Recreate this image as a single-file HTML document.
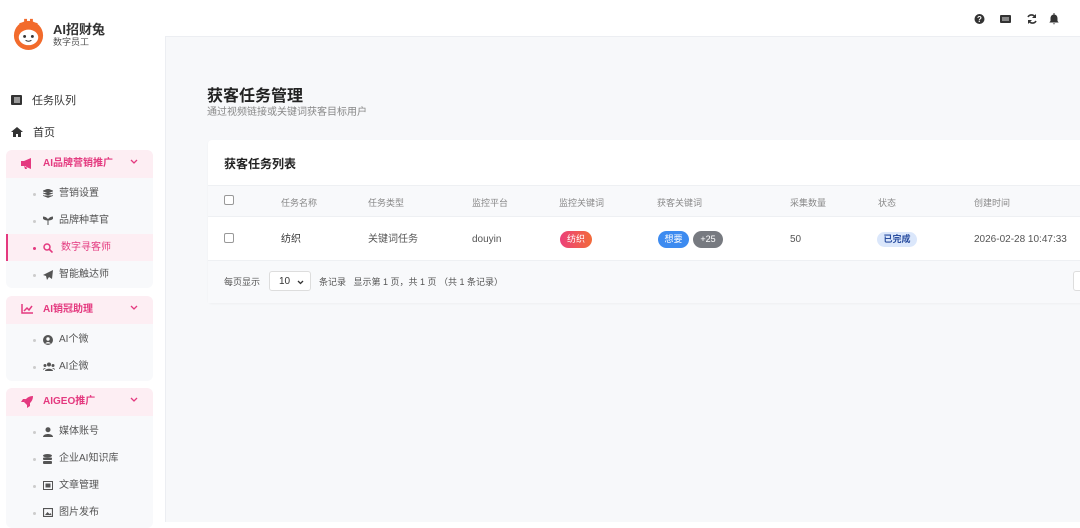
<!DOCTYPE html><html><head><meta charset="utf-8"><style>
*{box-sizing:border-box;margin:0;padding:0}
body{width:1080px;height:522px;overflow:hidden;font-family:"Liberation Sans","Noto Sans CJK SC",sans-serif;background:#fff;position:relative;color:#333}
.a{position:absolute}
.sb{left:0;top:0;width:165px;height:522px;background:#fff}
.main{left:165px;top:37px;width:915px;height:485px;background:#f7f8fa;border-left:1px solid #eceef2}
.hdr{left:165px;top:0;width:915px;height:37px;background:#fff;border-bottom:1px solid #eceef2}
.grp{left:6px;width:147px;background:#f8f9fb;border-radius:6px}
.gh{height:28px;background:#fdeef3;border-radius:6px 6px 0 0;color:#e4397f;font-size:10px;font-weight:bold;line-height:28px;padding-left:37px;position:relative}
.gh svg{position:absolute;left:15px;top:8px}
.gh svg.ch{left:auto;right:15px;top:9px}
.it{position:absolute;left:0;width:147px;height:27px;line-height:27px;font-size:10px;color:#555;padding-left:53px}
.it .d{position:absolute;left:27px;top:13px;width:3px;height:3px;border-radius:50%;background:#ccc}
.it svg{position:absolute;left:37px;top:9px}
.nav{left:11px;font-size:11px;color:#333}
.nav svg{vertical-align:-1px;margin-right:10px}
.card{left:208px;top:140px;width:880px;height:163px;background:#fff;border-radius:4px;box-shadow:0 1px 2px rgba(0,0,0,.04)}
.th{font-size:9px;color:#888}
.td{font-size:10px;color:#555;line-height:12px}
.cb{width:10px;height:10px;border:1px solid #999;border-radius:2px;background:#fff}
.pill{border-radius:9px;height:17px;line-height:17px;font-size:9px;color:#fff;text-align:center}
</style></head><body>
<div class="a sb">
 <svg class="a" style="left:11px;top:16px" width="35" height="35" viewBox="0 0 36 36"><path d="M10 7 L12 15 M15 3 L15 13 M21 3 L21 13 M26 7 L24 15" stroke="#f26b2c" stroke-width="3"/><circle cx="18" cy="20" r="15" fill="#f26b2c"/><ellipse cx="18" cy="22" rx="10" ry="8" fill="#fff"/><circle cx="14" cy="21" r="1.5" fill="#333"/><circle cx="22" cy="21" r="1.5" fill="#333"/><path d="M15 25 Q18 27 21 25" stroke="#333" fill="none"/></svg>
 <div class="a" style="left:53px;top:19px;font-size:13px;font-weight:bold;color:#333">AI招财兔</div>
 <div class="a" style="left:53px;top:35px;font-size:9px;color:#555">数字员工</div>
 <div class="a nav" style="top:92px"><svg width="11" height="10"><rect x="0" y="0" width="11" height="10" rx="1" fill="#333"/><path d="M3 3h6M3 5h6M3 7h6" stroke="#fff"/></svg>任务队列</div>
 <div class="a nav" style="top:124px"><svg width="12" height="10"><path d="M6 0L0 5h2v5h3V7h2v3h3V5h2z" fill="#333"/></svg>首页</div>
 <div class="a grp" style="top:150px;height:138px"><div class="gh"><svg width="12" height="11"><path d="M0 3h3l7-3v11l-7-3H0z M3 8l1 3h2l-1-3" fill="#e4397f"/></svg>AI品牌营销推广<svg class="ch" width="8" height="5"><path d="M1 1l3 3 3-3" stroke="#e4397f" fill="none" stroke-width="1.3"/></svg></div>
  <div class="it" style="top:30px"><span class="d"></span><svg width="10" height="9"><path d="M5 0L10 2 5 4 0 2z M0 4l5 2 5-2 M0 6.5l5 2 5-2" fill="#555" stroke="#555" stroke-width=".8"/></svg>营销设置</div>
  <div class="it" style="top:57px"><span class="d"></span><svg width="10" height="9"><path d="M5 9V4 M5 4C3 1 1 1 0 1c0 2 2 3 5 3 M5 4c2-3 4-3 5-3 0 2-2 3-5 3" fill="#555" stroke="#555"/></svg>品牌种草官</div>
  <div class="it" style="top:84px;background:#fdeef3;color:#e4397f;border-left:2px solid #e4397f"><span class="d" style="background:#e4397f;left:25px"></span><svg width="10" height="10" style="left:35px"><circle cx="4" cy="4" r="3" stroke="#e4397f" stroke-width="1.5" fill="none"/><path d="M6 6l3.5 3.5" stroke="#e4397f" stroke-width="1.6"/></svg>数字寻客师</div>
  <div class="it" style="top:111px"><span class="d"></span><svg width="10" height="10"><path d="M10 0L0 5l3 1 1 4 2-3 3 2z" fill="#555"/></svg>智能触达师</div>
 </div>
 <div class="a grp" style="top:296px;height:85px"><div class="gh"><svg width="12" height="10"><path d="M1 0v9h11" stroke="#e4397f" fill="none" stroke-width="1.5"/><path d="M3 7l3-3 2 2 3-4" stroke="#e4397f" fill="none" stroke-width="1.5"/></svg>AI销冠助理<svg class="ch" width="8" height="5"><path d="M1 1l3 3 3-3" stroke="#e4397f" fill="none" stroke-width="1.3"/></svg></div>
  <div class="it" style="top:30px"><span class="d"></span><svg width="10" height="10"><circle cx="5" cy="5" r="5" fill="#555"/><circle cx="5" cy="4" r="1.7" fill="#fff"/><path d="M2 8.5Q5 5.5 8 8.5" fill="#fff"/></svg>AI个微</div>
  <div class="it" style="top:57px"><span class="d"></span><svg width="12" height="9"><circle cx="6" cy="2.5" r="2" fill="#555"/><circle cx="2" cy="3.5" r="1.5" fill="#555"/><circle cx="10" cy="3.5" r="1.5" fill="#555"/><path d="M2 9c0-3 8-3 8 0zM0 8c0-2 2-2 3-2M12 8c0-2-2-2-3-2" fill="#555"/></svg>AI企微</div>
 </div>
 <div class="a grp" style="top:388px;height:140px"><div class="gh"><svg width="12" height="12"><path d="M12 0C8 0 5 2 3 6l3 3c4-2 6-5 6-9z M3 6L0 6l2-3h3z M6 9v3l3-2V7z" fill="#e4397f"/></svg>AIGEO推广<svg class="ch" width="8" height="5"><path d="M1 1l3 3 3-3" stroke="#e4397f" fill="none" stroke-width="1.3"/></svg></div>
  <div class="it" style="top:30px"><span class="d"></span><svg width="10" height="10"><circle cx="5" cy="2.7" r="2.5" fill="#555"/><path d="M0 10c0-4 10-4 10 0z" fill="#555"/></svg>媒体账号</div>
  <div class="it" style="top:57px"><span class="d"></span><svg width="9" height="10"><ellipse cx="4.5" cy="1.7" rx="4.5" ry="1.7" fill="#555"/><rect y="3.5" width="9" height="2.5" rx="1" fill="#555"/><rect y="7" width="9" height="3" rx="1" fill="#555"/></svg>企业AI知识库</div>
  <div class="it" style="top:84px"><span class="d"></span><svg width="10" height="9"><rect x=".5" y=".5" width="9" height="8" fill="none" stroke="#555"/><rect x="2.5" y="2.5" width="5" height="4" fill="#555"/></svg>文章管理</div>
  <div class="it" style="top:111px"><span class="d"></span><svg width="10" height="9"><rect x=".5" y=".5" width="9" height="8" fill="none" stroke="#555" stroke-width="1.2"/><path d="M2 7l2.5-3 2 2 1-1 1 2z" fill="#555"/></svg>图片发布</div>
 </div>
</div>
<div class="a hdr"></div>
<svg class="a" style="left:974px;top:13px" width="90" height="12">
 <circle cx="5.5" cy="6" r="5" fill="#333"/><text x="5.5" y="9" font-size="8" font-weight="bold" fill="#fff" text-anchor="middle" font-family="Liberation Sans">?</text>
 <rect x="26" y="2" width="11" height="8" rx="1" fill="#333"/><rect x="28" y="4" width="7" height="4" fill="#888"/>
 <path d="M54 4a4 4 0 0 1 7 0 M62 8a4 4 0 0 1-7 0" stroke="#333" stroke-width="1.6" fill="none"/><path d="M62 1v4h-4z M54 11V7h4z" fill="#333"/>
 <path d="M80 1.5c-2.5 0-3.5 2-3.5 4v2.5l-1.2 1.5h9.4L83.5 8V5.5c0-2-1-4-3.5-4z M78.8 10.5a1.3 1.3 0 0 0 2.4 0z" fill="#333"/><rect x="79.5" y="0" width="1" height="2" fill="#333"/>
</svg>
<div class="a main"></div>
<div class="a" style="left:207px;top:82px;font-size:16px;font-weight:bold;color:#222">获客任务管理</div>
<div class="a" style="left:207px;top:103px;font-size:10px;color:#888">通过视频链接或关键词获客目标用户</div>
<div class="a card">
 <div class="a" style="left:16px;top:15px;font-size:12px;font-weight:bold;color:#222">获客任务列表</div>
 <div class="a" style="left:0;top:45px;width:880px;height:32px;background:#f8f9fb;border-top:1px solid #eef0f3;border-bottom:1px solid #eef0f3"></div>
 <div class="a" style="left:0;top:120px;width:880px;height:43px;background:#f8f9fb;border-top:1px solid #eef0f3"></div>
</div>
<div class="a cb" style="left:224px;top:195px"></div>
<div class="a th" style="left:281px;top:196px">任务名称</div><div class="a th" style="left:368px;top:196px">任务类型</div><div class="a th" style="left:472px;top:196px">监控平台</div><div class="a th" style="left:559px;top:196px">监控关键词</div><div class="a th" style="left:657px;top:196px">获客关键词</div><div class="a th" style="left:790px;top:196px">采集数量</div><div class="a th" style="left:878px;top:196px">状态</div><div class="a th" style="left:974px;top:196px">创建时间</div>
<div class="a cb" style="left:224px;top:233px"></div>
<div class="a td" style="left:281px;top:234px;color:#333">纺织</div><div class="a td" style="left:368px;top:234px">关键词任务</div><div class="a td" style="left:472px;top:234px">douyin</div>
<div class="a pill" style="left:560px;top:231px;width:32px;background:linear-gradient(90deg,#ec407a,#f26b3a)">纺织</div>
<div class="a pill" style="left:658px;top:231px;width:31px;background:#3d8bf0">想要</div>
<div class="a pill" style="left:693px;top:231px;width:30px;background:#777a80">+25</div>
<div class="a td" style="left:790px;top:234px">50</div>
<div class="a pill" style="left:877px;top:232px;width:40px;height:15px;line-height:15px;background:#dbe7fb;color:#2a4ea0;font-weight:bold">已完成</div>
<div class="a td" style="left:974px;top:234px">2026-02-28 10:47:33</div>
<div class="a" style="left:224px;top:275px;font-size:9px;color:#555">每页显示</div>
<div class="a" style="left:269px;top:271px;width:42px;height:20px;border:1px solid #ddd;border-radius:3px;background:#fff;font-size:10px;padding:4px 0 0 9px;color:#333">10<svg style="position:absolute;right:6px;top:8px" width="7" height="5"><path d="M1 1l2.5 2.5L6 1" stroke="#333" fill="none" stroke-width="1.3"/></svg></div>
<div class="a" style="left:319px;top:275px;font-size:9px;color:#555">条记录 &nbsp;&nbsp;显示第 1 页，共 1 页 （共 1 条记录）</div>
<div class="a" style="left:1073px;top:271px;width:10px;height:20px;border:1px solid #ddd;border-radius:3px;background:#fff"></div>
</body></html>
